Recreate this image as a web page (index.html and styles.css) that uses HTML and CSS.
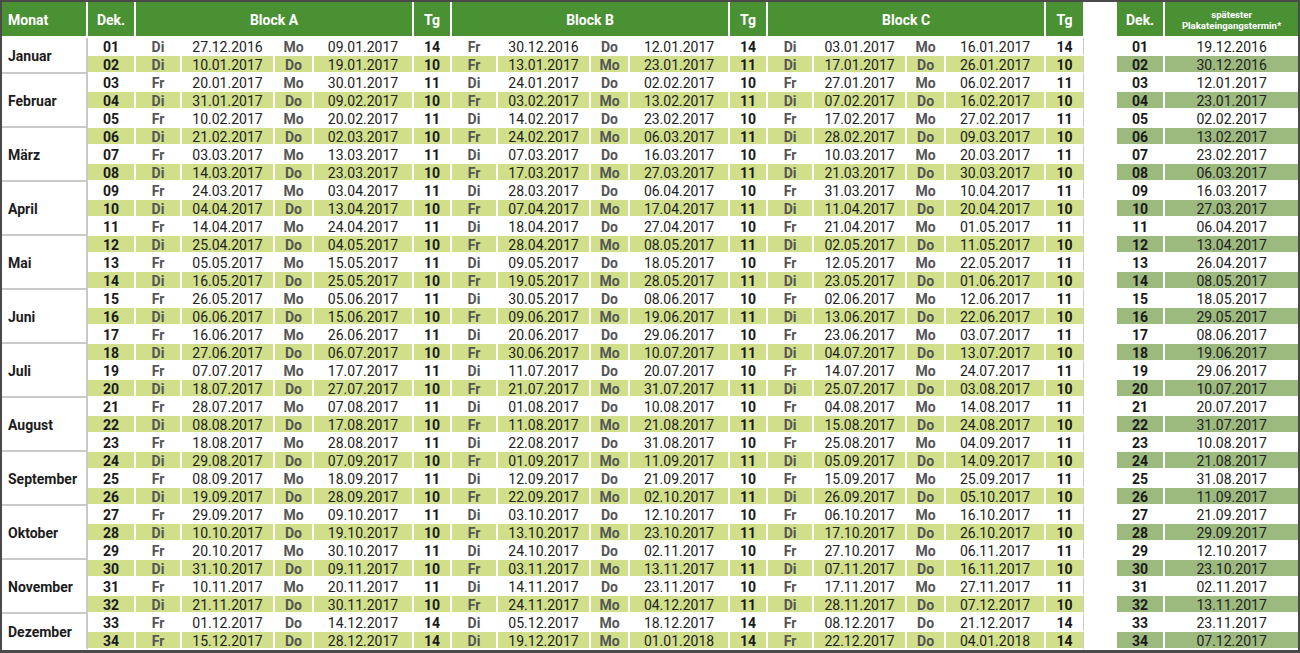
FILE: index.html
```html
<!DOCTYPE html>
<html lang="de">
<head>
<meta charset="utf-8">
<title>Dekaden 2017</title>
<link rel="stylesheet" href="styles.css">
</head>
<body>
<div class="sheet">
<table class="main">
<colgroup>
<col class="c-mon"><col class="c-dek">
<col class="c-wd"><col class="c-dt"><col class="c-wd2"><col class="c-dt2"><col class="c-tg">
<col class="c-wd"><col class="c-dt"><col class="c-wd2"><col class="c-dt2"><col class="c-tg">
<col class="c-wd"><col class="c-dt"><col class="c-wd2"><col class="c-dt2"><col class="c-tgl">
</colgroup>
<thead>
<tr><th class="hm">Monat</th><th>Dek.</th><th colspan="4">Block A</th><th>Tg</th><th colspan="4">Block B</th><th>Tg</th><th colspan="4">Block C</th><th class="last">Tg</th></tr>
</thead>
<tbody>
<tr><td class="m" rowspan="2">Januar</td><td class="d">01</td><td class="w">Di</td><td class="t">27.12.2016</td><td class="w">Mo</td><td class="t">09.01.2017</td><td class="n">14</td><td class="w">Fr</td><td class="t">30.12.2016</td><td class="w">Do</td><td class="t">12.01.2017</td><td class="n">14</td><td class="w">Di</td><td class="t">03.01.2017</td><td class="w">Mo</td><td class="t">16.01.2017</td><td class="n last">14</td></tr>
<tr class="g"><td class="d">02</td><td class="w">Di</td><td class="t">10.01.2017</td><td class="w">Do</td><td class="t">19.01.2017</td><td class="n">10</td><td class="w">Fr</td><td class="t">13.01.2017</td><td class="w">Mo</td><td class="t">23.01.2017</td><td class="n">11</td><td class="w">Di</td><td class="t">17.01.2017</td><td class="w">Do</td><td class="t">26.01.2017</td><td class="n last">10</td></tr>
<tr><td class="m" rowspan="3">Februar</td><td class="d">03</td><td class="w">Fr</td><td class="t">20.01.2017</td><td class="w">Mo</td><td class="t">30.01.2017</td><td class="n">11</td><td class="w">Di</td><td class="t">24.01.2017</td><td class="w">Do</td><td class="t">02.02.2017</td><td class="n">10</td><td class="w">Fr</td><td class="t">27.01.2017</td><td class="w">Mo</td><td class="t">06.02.2017</td><td class="n last">11</td></tr>
<tr class="g"><td class="d">04</td><td class="w">Di</td><td class="t">31.01.2017</td><td class="w">Do</td><td class="t">09.02.2017</td><td class="n">10</td><td class="w">Fr</td><td class="t">03.02.2017</td><td class="w">Mo</td><td class="t">13.02.2017</td><td class="n">11</td><td class="w">Di</td><td class="t">07.02.2017</td><td class="w">Do</td><td class="t">16.02.2017</td><td class="n last">10</td></tr>
<tr><td class="d">05</td><td class="w">Fr</td><td class="t">10.02.2017</td><td class="w">Mo</td><td class="t">20.02.2017</td><td class="n">11</td><td class="w">Di</td><td class="t">14.02.2017</td><td class="w">Do</td><td class="t">23.02.2017</td><td class="n">10</td><td class="w">Fr</td><td class="t">17.02.2017</td><td class="w">Mo</td><td class="t">27.02.2017</td><td class="n last">11</td></tr>
<tr class="g"><td class="m" rowspan="3">März</td><td class="d">06</td><td class="w">Di</td><td class="t">21.02.2017</td><td class="w">Do</td><td class="t">02.03.2017</td><td class="n">10</td><td class="w">Fr</td><td class="t">24.02.2017</td><td class="w">Mo</td><td class="t">06.03.2017</td><td class="n">11</td><td class="w">Di</td><td class="t">28.02.2017</td><td class="w">Do</td><td class="t">09.03.2017</td><td class="n last">10</td></tr>
<tr><td class="d">07</td><td class="w">Fr</td><td class="t">03.03.2017</td><td class="w">Mo</td><td class="t">13.03.2017</td><td class="n">11</td><td class="w">Di</td><td class="t">07.03.2017</td><td class="w">Do</td><td class="t">16.03.2017</td><td class="n">10</td><td class="w">Fr</td><td class="t">10.03.2017</td><td class="w">Mo</td><td class="t">20.03.2017</td><td class="n last">11</td></tr>
<tr class="g"><td class="d">08</td><td class="w">Di</td><td class="t">14.03.2017</td><td class="w">Do</td><td class="t">23.03.2017</td><td class="n">10</td><td class="w">Fr</td><td class="t">17.03.2017</td><td class="w">Mo</td><td class="t">27.03.2017</td><td class="n">11</td><td class="w">Di</td><td class="t">21.03.2017</td><td class="w">Do</td><td class="t">30.03.2017</td><td class="n last">10</td></tr>
<tr><td class="m" rowspan="3">April</td><td class="d">09</td><td class="w">Fr</td><td class="t">24.03.2017</td><td class="w">Mo</td><td class="t">03.04.2017</td><td class="n">11</td><td class="w">Di</td><td class="t">28.03.2017</td><td class="w">Do</td><td class="t">06.04.2017</td><td class="n">10</td><td class="w">Fr</td><td class="t">31.03.2017</td><td class="w">Mo</td><td class="t">10.04.2017</td><td class="n last">11</td></tr>
<tr class="g"><td class="d">10</td><td class="w">Di</td><td class="t">04.04.2017</td><td class="w">Do</td><td class="t">13.04.2017</td><td class="n">10</td><td class="w">Fr</td><td class="t">07.04.2017</td><td class="w">Mo</td><td class="t">17.04.2017</td><td class="n">11</td><td class="w">Di</td><td class="t">11.04.2017</td><td class="w">Do</td><td class="t">20.04.2017</td><td class="n last">10</td></tr>
<tr><td class="d">11</td><td class="w">Fr</td><td class="t">14.04.2017</td><td class="w">Mo</td><td class="t">24.04.2017</td><td class="n">11</td><td class="w">Di</td><td class="t">18.04.2017</td><td class="w">Do</td><td class="t">27.04.2017</td><td class="n">10</td><td class="w">Fr</td><td class="t">21.04.2017</td><td class="w">Mo</td><td class="t">01.05.2017</td><td class="n last">11</td></tr>
<tr class="g"><td class="m" rowspan="3">Mai</td><td class="d">12</td><td class="w">Di</td><td class="t">25.04.2017</td><td class="w">Do</td><td class="t">04.05.2017</td><td class="n">10</td><td class="w">Fr</td><td class="t">28.04.2017</td><td class="w">Mo</td><td class="t">08.05.2017</td><td class="n">11</td><td class="w">Di</td><td class="t">02.05.2017</td><td class="w">Do</td><td class="t">11.05.2017</td><td class="n last">10</td></tr>
<tr><td class="d">13</td><td class="w">Fr</td><td class="t">05.05.2017</td><td class="w">Mo</td><td class="t">15.05.2017</td><td class="n">11</td><td class="w">Di</td><td class="t">09.05.2017</td><td class="w">Do</td><td class="t">18.05.2017</td><td class="n">10</td><td class="w">Fr</td><td class="t">12.05.2017</td><td class="w">Mo</td><td class="t">22.05.2017</td><td class="n last">11</td></tr>
<tr class="g"><td class="d">14</td><td class="w">Di</td><td class="t">16.05.2017</td><td class="w">Do</td><td class="t">25.05.2017</td><td class="n">10</td><td class="w">Fr</td><td class="t">19.05.2017</td><td class="w">Mo</td><td class="t">28.05.2017</td><td class="n">11</td><td class="w">Di</td><td class="t">23.05.2017</td><td class="w">Do</td><td class="t">01.06.2017</td><td class="n last">10</td></tr>
<tr><td class="m" rowspan="3">Juni</td><td class="d">15</td><td class="w">Fr</td><td class="t">26.05.2017</td><td class="w">Mo</td><td class="t">05.06.2017</td><td class="n">11</td><td class="w">Di</td><td class="t">30.05.2017</td><td class="w">Do</td><td class="t">08.06.2017</td><td class="n">10</td><td class="w">Fr</td><td class="t">02.06.2017</td><td class="w">Mo</td><td class="t">12.06.2017</td><td class="n last">11</td></tr>
<tr class="g"><td class="d">16</td><td class="w">Di</td><td class="t">06.06.2017</td><td class="w">Do</td><td class="t">15.06.2017</td><td class="n">10</td><td class="w">Fr</td><td class="t">09.06.2017</td><td class="w">Mo</td><td class="t">19.06.2017</td><td class="n">11</td><td class="w">Di</td><td class="t">13.06.2017</td><td class="w">Do</td><td class="t">22.06.2017</td><td class="n last">10</td></tr>
<tr><td class="d">17</td><td class="w">Fr</td><td class="t">16.06.2017</td><td class="w">Mo</td><td class="t">26.06.2017</td><td class="n">11</td><td class="w">Di</td><td class="t">20.06.2017</td><td class="w">Do</td><td class="t">29.06.2017</td><td class="n">10</td><td class="w">Fr</td><td class="t">23.06.2017</td><td class="w">Mo</td><td class="t">03.07.2017</td><td class="n last">11</td></tr>
<tr class="g"><td class="m" rowspan="3">Juli</td><td class="d">18</td><td class="w">Di</td><td class="t">27.06.2017</td><td class="w">Do</td><td class="t">06.07.2017</td><td class="n">10</td><td class="w">Fr</td><td class="t">30.06.2017</td><td class="w">Mo</td><td class="t">10.07.2017</td><td class="n">11</td><td class="w">Di</td><td class="t">04.07.2017</td><td class="w">Do</td><td class="t">13.07.2017</td><td class="n last">10</td></tr>
<tr><td class="d">19</td><td class="w">Fr</td><td class="t">07.07.2017</td><td class="w">Mo</td><td class="t">17.07.2017</td><td class="n">11</td><td class="w">Di</td><td class="t">11.07.2017</td><td class="w">Do</td><td class="t">20.07.2017</td><td class="n">10</td><td class="w">Fr</td><td class="t">14.07.2017</td><td class="w">Mo</td><td class="t">24.07.2017</td><td class="n last">11</td></tr>
<tr class="g"><td class="d">20</td><td class="w">Di</td><td class="t">18.07.2017</td><td class="w">Do</td><td class="t">27.07.2017</td><td class="n">10</td><td class="w">Fr</td><td class="t">21.07.2017</td><td class="w">Mo</td><td class="t">31.07.2017</td><td class="n">11</td><td class="w">Di</td><td class="t">25.07.2017</td><td class="w">Do</td><td class="t">03.08.2017</td><td class="n last">10</td></tr>
<tr><td class="m" rowspan="3">August</td><td class="d">21</td><td class="w">Fr</td><td class="t">28.07.2017</td><td class="w">Mo</td><td class="t">07.08.2017</td><td class="n">11</td><td class="w">Di</td><td class="t">01.08.2017</td><td class="w">Do</td><td class="t">10.08.2017</td><td class="n">10</td><td class="w">Fr</td><td class="t">04.08.2017</td><td class="w">Mo</td><td class="t">14.08.2017</td><td class="n last">11</td></tr>
<tr class="g"><td class="d">22</td><td class="w">Di</td><td class="t">08.08.2017</td><td class="w">Do</td><td class="t">17.08.2017</td><td class="n">10</td><td class="w">Fr</td><td class="t">11.08.2017</td><td class="w">Mo</td><td class="t">21.08.2017</td><td class="n">11</td><td class="w">Di</td><td class="t">15.08.2017</td><td class="w">Do</td><td class="t">24.08.2017</td><td class="n last">10</td></tr>
<tr><td class="d">23</td><td class="w">Fr</td><td class="t">18.08.2017</td><td class="w">Mo</td><td class="t">28.08.2017</td><td class="n">11</td><td class="w">Di</td><td class="t">22.08.2017</td><td class="w">Do</td><td class="t">31.08.2017</td><td class="n">10</td><td class="w">Fr</td><td class="t">25.08.2017</td><td class="w">Mo</td><td class="t">04.09.2017</td><td class="n last">11</td></tr>
<tr class="g"><td class="m" rowspan="3">September</td><td class="d">24</td><td class="w">Di</td><td class="t">29.08.2017</td><td class="w">Do</td><td class="t">07.09.2017</td><td class="n">10</td><td class="w">Fr</td><td class="t">01.09.2017</td><td class="w">Mo</td><td class="t">11.09.2017</td><td class="n">11</td><td class="w">Di</td><td class="t">05.09.2017</td><td class="w">Do</td><td class="t">14.09.2017</td><td class="n last">10</td></tr>
<tr><td class="d">25</td><td class="w">Fr</td><td class="t">08.09.2017</td><td class="w">Mo</td><td class="t">18.09.2017</td><td class="n">11</td><td class="w">Di</td><td class="t">12.09.2017</td><td class="w">Do</td><td class="t">21.09.2017</td><td class="n">10</td><td class="w">Fr</td><td class="t">15.09.2017</td><td class="w">Mo</td><td class="t">25.09.2017</td><td class="n last">11</td></tr>
<tr class="g"><td class="d">26</td><td class="w">Di</td><td class="t">19.09.2017</td><td class="w">Do</td><td class="t">28.09.2017</td><td class="n">10</td><td class="w">Fr</td><td class="t">22.09.2017</td><td class="w">Mo</td><td class="t">02.10.2017</td><td class="n">11</td><td class="w">Di</td><td class="t">26.09.2017</td><td class="w">Do</td><td class="t">05.10.2017</td><td class="n last">10</td></tr>
<tr><td class="m" rowspan="3">Oktober</td><td class="d">27</td><td class="w">Fr</td><td class="t">29.09.2017</td><td class="w">Mo</td><td class="t">09.10.2017</td><td class="n">11</td><td class="w">Di</td><td class="t">03.10.2017</td><td class="w">Do</td><td class="t">12.10.2017</td><td class="n">10</td><td class="w">Fr</td><td class="t">06.10.2017</td><td class="w">Mo</td><td class="t">16.10.2017</td><td class="n last">11</td></tr>
<tr class="g"><td class="d">28</td><td class="w">Di</td><td class="t">10.10.2017</td><td class="w">Do</td><td class="t">19.10.2017</td><td class="n">10</td><td class="w">Fr</td><td class="t">13.10.2017</td><td class="w">Mo</td><td class="t">23.10.2017</td><td class="n">11</td><td class="w">Di</td><td class="t">17.10.2017</td><td class="w">Do</td><td class="t">26.10.2017</td><td class="n last">10</td></tr>
<tr><td class="d">29</td><td class="w">Fr</td><td class="t">20.10.2017</td><td class="w">Mo</td><td class="t">30.10.2017</td><td class="n">11</td><td class="w">Di</td><td class="t">24.10.2017</td><td class="w">Do</td><td class="t">02.11.2017</td><td class="n">10</td><td class="w">Fr</td><td class="t">27.10.2017</td><td class="w">Mo</td><td class="t">06.11.2017</td><td class="n last">11</td></tr>
<tr class="g"><td class="m" rowspan="3">November</td><td class="d">30</td><td class="w">Di</td><td class="t">31.10.2017</td><td class="w">Do</td><td class="t">09.11.2017</td><td class="n">10</td><td class="w">Fr</td><td class="t">03.11.2017</td><td class="w">Mo</td><td class="t">13.11.2017</td><td class="n">11</td><td class="w">Di</td><td class="t">07.11.2017</td><td class="w">Do</td><td class="t">16.11.2017</td><td class="n last">10</td></tr>
<tr><td class="d">31</td><td class="w">Fr</td><td class="t">10.11.2017</td><td class="w">Mo</td><td class="t">20.11.2017</td><td class="n">11</td><td class="w">Di</td><td class="t">14.11.2017</td><td class="w">Do</td><td class="t">23.11.2017</td><td class="n">10</td><td class="w">Fr</td><td class="t">17.11.2017</td><td class="w">Mo</td><td class="t">27.11.2017</td><td class="n last">11</td></tr>
<tr class="g"><td class="d">32</td><td class="w">Di</td><td class="t">21.11.2017</td><td class="w">Do</td><td class="t">30.11.2017</td><td class="n">10</td><td class="w">Fr</td><td class="t">24.11.2017</td><td class="w">Mo</td><td class="t">04.12.2017</td><td class="n">11</td><td class="w">Di</td><td class="t">28.11.2017</td><td class="w">Do</td><td class="t">07.12.2017</td><td class="n last">10</td></tr>
<tr><td class="m mlast" rowspan="2">Dezember</td><td class="d">33</td><td class="w">Fr</td><td class="t">01.12.2017</td><td class="w">Do</td><td class="t">14.12.2017</td><td class="n">14</td><td class="w">Di</td><td class="t">05.12.2017</td><td class="w">Mo</td><td class="t">18.12.2017</td><td class="n">14</td><td class="w">Fr</td><td class="t">08.12.2017</td><td class="w">Do</td><td class="t">21.12.2017</td><td class="n last">14</td></tr>
<tr class="g"><td class="d">34</td><td class="w">Fr</td><td class="t">15.12.2017</td><td class="w">Do</td><td class="t">28.12.2017</td><td class="n">14</td><td class="w">Di</td><td class="t">19.12.2017</td><td class="w">Mo</td><td class="t">01.01.2018</td><td class="n">14</td><td class="w">Fr</td><td class="t">22.12.2017</td><td class="w">Do</td><td class="t">04.01.2018</td><td class="n last">14</td></tr>
</tbody>
</table>
<div class="gap"></div>
<table class="side">
<colgroup><col class="s-dek"><col class="s-date"></colgroup>
<thead>
<tr><th>Dek.</th><th class="small">spätester<br>Plakateingangstermin*</th></tr>
</thead>
<tbody>
<tr><td class="d">01</td><td class="t">19.12.2016</td></tr>
<tr class="g"><td class="d">02</td><td class="t">30.12.2016</td></tr>
<tr><td class="d">03</td><td class="t">12.01.2017</td></tr>
<tr class="g"><td class="d">04</td><td class="t">23.01.2017</td></tr>
<tr><td class="d">05</td><td class="t">02.02.2017</td></tr>
<tr class="g"><td class="d">06</td><td class="t">13.02.2017</td></tr>
<tr><td class="d">07</td><td class="t">23.02.2017</td></tr>
<tr class="g"><td class="d">08</td><td class="t">06.03.2017</td></tr>
<tr><td class="d">09</td><td class="t">16.03.2017</td></tr>
<tr class="g"><td class="d">10</td><td class="t">27.03.2017</td></tr>
<tr><td class="d">11</td><td class="t">06.04.2017</td></tr>
<tr class="g"><td class="d">12</td><td class="t">13.04.2017</td></tr>
<tr><td class="d">13</td><td class="t">26.04.2017</td></tr>
<tr class="g"><td class="d">14</td><td class="t">08.05.2017</td></tr>
<tr><td class="d">15</td><td class="t">18.05.2017</td></tr>
<tr class="g"><td class="d">16</td><td class="t">29.05.2017</td></tr>
<tr><td class="d">17</td><td class="t">08.06.2017</td></tr>
<tr class="g"><td class="d">18</td><td class="t">19.06.2017</td></tr>
<tr><td class="d">19</td><td class="t">29.06.2017</td></tr>
<tr class="g"><td class="d">20</td><td class="t">10.07.2017</td></tr>
<tr><td class="d">21</td><td class="t">20.07.2017</td></tr>
<tr class="g"><td class="d">22</td><td class="t">31.07.2017</td></tr>
<tr><td class="d">23</td><td class="t">10.08.2017</td></tr>
<tr class="g"><td class="d">24</td><td class="t">21.08.2017</td></tr>
<tr><td class="d">25</td><td class="t">31.08.2017</td></tr>
<tr class="g"><td class="d">26</td><td class="t">11.09.2017</td></tr>
<tr><td class="d">27</td><td class="t">21.09.2017</td></tr>
<tr class="g"><td class="d">28</td><td class="t">29.09.2017</td></tr>
<tr><td class="d">29</td><td class="t">12.10.2017</td></tr>
<tr class="g"><td class="d">30</td><td class="t">23.10.2017</td></tr>
<tr><td class="d">31</td><td class="t">02.11.2017</td></tr>
<tr class="g"><td class="d">32</td><td class="t">13.11.2017</td></tr>
<tr><td class="d">33</td><td class="t">23.11.2017</td></tr>
<tr class="g"><td class="d">34</td><td class="t">07.12.2017</td></tr>
</tbody>
</table>
</div>
</body>
</html>
```
FILE: styles.css
```css
html, body {
  margin: 0;
  padding: 0;
  background: #ffffff;
}

body {
  font-family: Roboto, "Liberation Sans", sans-serif;
  color: #222222;
}

.sheet {
  display: flex;
  align-items: flex-start;
  box-sizing: border-box;
  width: 1300px;
  height: 653px;
  border: 2px solid #4a4a4a;
  border-bottom-width: 3px;
  background: #ffffff;
  overflow: hidden;
}

table {
  border-collapse: separate;
  border-spacing: 0;
  table-layout: fixed;
  flex: none;
}

.main { width: 1082px; }
.side { width: 181px; }

.gap {
  flex: none;
  width: 33px;
  align-self: stretch;
}

.c-mon { width: 86px; }
.c-dek { width: 48px; }
.c-wd { width: 46px; }
.c-dt { width: 93px; }
.c-wd2 { width: 39px; }
.c-dt2 { width: 100px; }
.c-tg { width: 38px; }
.c-tgl { width: 38px; }

.s-dek { width: 48px; }
.s-date { width: 133px; }

thead tr { height: 36px; }
tbody tr { height: 18px; }

th, td {
  box-sizing: border-box;
  padding: 0;
  text-align: center;
  vertical-align: middle;
  white-space: nowrap;
  border-right: 2px solid #ffffff;
  border-bottom: 2px solid #ffffff;
}

th {
  height: 36px;
  background: #4a9134;
  color: #ffffff;
  font-weight: 700;
  font-size: 14px;
  line-height: 16px;
  padding-top: 2px;
}

th.hm {
  text-align: left;
  padding-left: 6px;
}

th.last {
  border-right: 1px solid #ffffff;
}

.side th:last-child {
  border-right: 0;
}

th.small {
  font-size: 9.6px;
  line-height: 11px;
}

td {
  height: 18px;
  font-size: 14px;
  line-height: 14px;
  padding-top: 2px;
  background: #ffffff;
}

tr.g td { background: #d1df8b; }
.side tr.g td { background: #9cb97e; }

td.m {
  background: #ffffff;
  text-align: left;
  padding-left: 6px;
  padding-top: 2px;
  font-weight: 700;
  color: #1c1c1c;
  border-right-color: #c9c9c9;
  border-bottom-color: #c9c9c9;
}

tr.g td.m { background: #ffffff; }

td.m.mlast { border-bottom-color: #ffffff; }

td.d, td.n {
  font-weight: 700;
  color: #1a1a1a;
}

td.w {
  font-weight: 700;
  color: #555555;
}

td.t {
  font-weight: 400;
  color: #222222;
}

td.last {
  border-right: 1px solid #c9c9c9;
}

.side td:last-child {
  border-right: 0;
}
```
